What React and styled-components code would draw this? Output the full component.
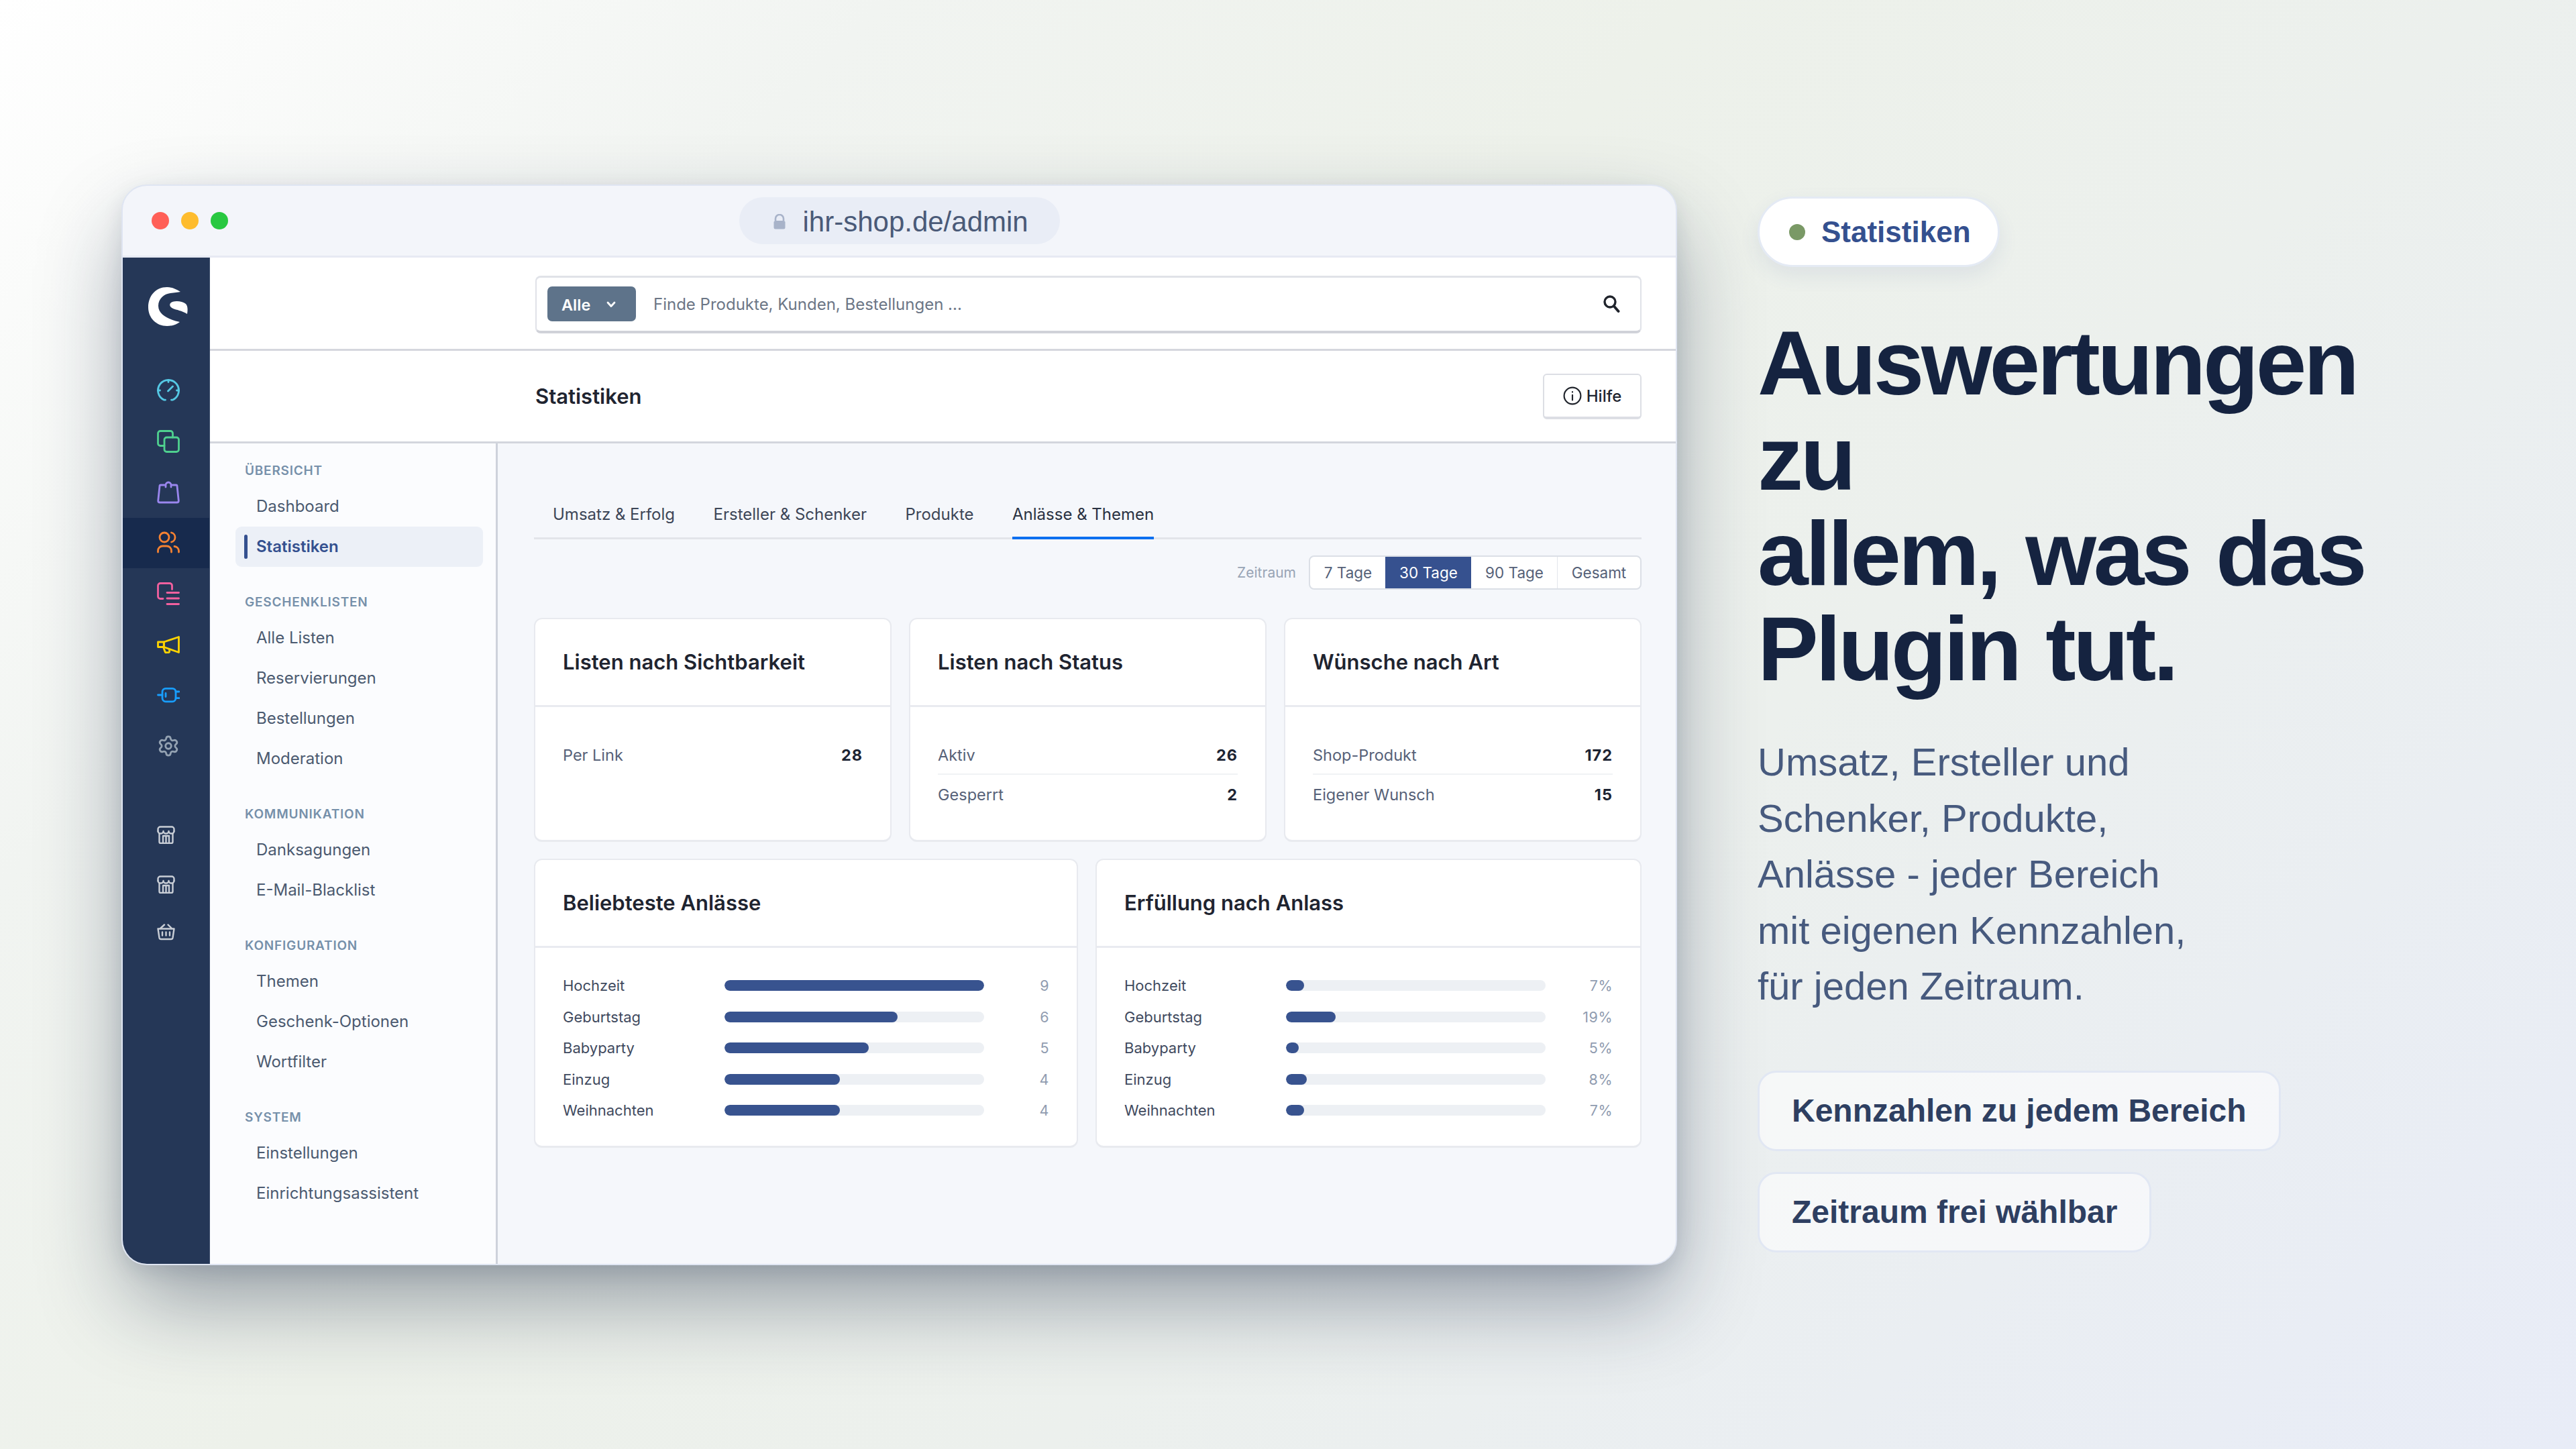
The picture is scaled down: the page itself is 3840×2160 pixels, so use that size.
import React from 'react';
import styled, { createGlobalStyle } from 'styled-components';
import { Settings } from 'lucide-react';

const GlobalStyle = createGlobalStyle`
  html, body { margin: 0; padding: 0; }
  * { box-sizing: border-box; }
  body { font-family: 'Inter', 'Liberation Sans', sans-serif; }
`;

const Page = styled.div`
  width: 3840px;
  height: 2160px;
  overflow: hidden;
  display: flex;
  align-items: center;
  gap: 120px;
  padding-left: 181px;
  background: linear-gradient(135deg, #ffffff 0%, #f1f4f1 22%, #edf1ea 42%, #ecf0ed 62%, #e8ecf7 100%);
`;

const Browser = styled.div`
  width: 2319px;
  height: 1611px;
  flex: none;
  display: flex;
  flex-direction: column;
  background: #f3f5fa;
  border: 2px solid #dfe5f2;
  border-radius: 38px;
  overflow: hidden;
  box-shadow: 0 60px 130px -10px rgba(21, 35, 64, 0.42), 0 10px 30px rgba(21, 35, 64, 0.1);
`;

const TitleBar = styled.div`
  height: 107px;
  flex: none;
  display: grid;
  grid-template-columns: 1fr auto 1fr;
  align-items: center;
  padding-left: 43px;
  border-bottom: 3px solid #e7eaf3;
`;

const Dots = styled.div`
  display: flex;
  gap: 18px;
`;

const Dot = styled.span`
  width: 26px;
  height: 26px;
  border-radius: 50%;
  background: ${(p) => p.$color};
`;

const UrlPill = styled.div`
  height: 70px;
  width: 478px;
  display: flex;
  align-items: center;
  gap: 25px;
  padding: 3px 0 0 50px;
  margin: 1px 0 0 -43px;
  border-radius: 35px;
  background: #e9edf6;
  color: #4a5a78;
  font-family: 'Liberation Sans', sans-serif;
  font-size: 42px;
`;

const Shell = styled.div`
  flex: 1;
  display: flex;
  min-height: 0;
`;

const Rail = styled.div`
  width: 130px;
  flex: none;
  background: #253757;
  display: flex;
  flex-direction: column;
  border-right: 1px solid #3d4e6c;
`;

const LogoSlot = styled.div`
  height: 161px;
  padding: 44px 0 0 38px;
`;

const RailItem = styled.div`
  height: ${(p) => p.$h || 75.7}px;
  display: flex;
  align-items: center;
  padding-left: 51px;
  background: ${(p) => (p.$active ? '#172a4d' : 'transparent')};
  color: ${(p) => p.$color};
`;

const RailGap = styled.div`
  height: 57px;
`;

const Main = styled.div`
  flex: 1;
  display: flex;
  flex-direction: column;
  min-width: 0;
`;

const SearchRow = styled.div`
  height: 139px;
  flex: none;
  background: #fff;
  border-bottom: 3px solid #d5d7de;
  padding: 27px 51px 0 485px;
`;

const SearchBox = styled.div`
  height: 86px;
  display: flex;
  align-items: center;
  padding: 0 30px 0 16px;
  border: 2px solid #e0e2e8;
  border-bottom: 4px solid #d0d2d9;
  border-top-width: 3px;
  border-radius: 8px;
`;

const ScopeButton = styled.div`
  width: 132px;
  height: 52px;
  display: flex;
  align-items: center;
  gap: 24px;
  padding: 2px 0 0 21px;
  background: #5e738a;
  border-radius: 7px;
  color: #fff;
  font-size: 23.5px;
  font-weight: 600;
`;

const Placeholder = styled.div`
  flex: 1;
  margin-left: 26px;
  color: #6c7686;
  font-size: 24px;
`;

const PageHead = styled.div`
  height: 138px;
  flex: none;
  display: flex;
  align-items: center;
  justify-content: space-between;
  background: #fff;
  border-bottom: 3px solid #d3d6dd;
  padding: 0 51px 0 485px;
`;

const PageTitle = styled.h1`
  margin: 0;
  color: #1f2430;
  font-size: 31px;
  font-weight: 600;
`;

const HelpButton = styled.div`
  width: 147px;
  height: 68px;
  margin-top: 2px;
  display: flex;
  align-items: center;
  justify-content: center;
  gap: 7px;
  background: #fff;
  border: 2px solid #dcdee4;
  border-bottom-width: 4px;
  border-radius: 6px;
  color: #1f2430;
  font-size: 24px;
  font-weight: 500;
`;

const Content = styled.div`
  flex: 1;
  display: flex;
  min-height: 0;
`;

const SideNav = styled.nav`
  width: 429px;
  flex: none;
  background: #fbfcfe;
  border-right: 3px solid #ced2db;
  padding: 18px 19px 0 38px;
`;

const NavHead = styled.div`
  height: 46px;
  display: flex;
  align-items: center;
  margin: ${(p) => (p.$first ? 0 : 30)}px 0 0 14px;
  color: #7690aa;
  font-size: 19px;
  font-weight: 600;
  letter-spacing: 0.8px;
`;

const NavItem = styled.div`
  position: relative;
  height: 60px;
  display: flex;
  align-items: center;
  padding-left: 31px;
  border-radius: 9px;
  background: ${(p) => (p.$active ? '#ecf0f7' : 'transparent')};
  color: ${(p) => (p.$active ? '#34508f' : '#4b5a70')};
  font-size: 24px;
  font-weight: ${(p) => (p.$active ? 600 : 400)};

  ${(p) => p.$active && `
    &::before {
      content: '';
      position: absolute;
      left: 13px;
      top: 12px;
      width: 5px;
      height: 36px;
      border-radius: 3px;
      background: #34508f;
    }
  `}
`;

const Panel = styled.div`
  flex: 1;
  background: #f5f7fb;
  padding: 69px 51px 0 54px;
  min-width: 0;
`;

const TabBar = styled.div`
  height: 74px;
  display: flex;
  gap: 57.5px;
  padding-left: 28px;
  border-bottom: 3px solid #e3e5ea;
`;

const Tab = styled.div`
  height: 74px;
  flex: none;
  display: flex;
  align-items: center;
  padding-top: 4px;
  color: ${(p) => (p.$active ? '#2a3242' : '#3d4657')};
  font-size: 24px;
  border-bottom: 4px solid ${(p) => (p.$active ? '#0d6ff0' : 'transparent')};
`;

const RangeRow = styled.div`
  margin-top: 24px;
  display: flex;
  justify-content: flex-end;
  align-items: center;
  gap: 19px;
`;

const RangeLabel = styled.div`
  color: #98a4b5;
  font-size: 21px;
`;

const Segments = styled.div`
  height: 51px;
  display: flex;
  background: #fff;
  border: 2px solid #dbdfe6;
  border-radius: 8px;
  overflow: hidden;
`;

const Segment = styled.div`
  width: ${(p) => p.$w}px;
  display: flex;
  align-items: center;
  justify-content: center;
  background: ${(p) => (p.$active ? '#36518f' : 'transparent')};
  color: ${(p) => (p.$active ? '#fff' : '#566178')};
  font-size: 22.5px;
  border-left: 1px solid ${(p) => (p.$divider ? '#e3e6ec' : 'transparent')};
`;

const CardGrid = styled.div`
  display: grid;
  grid-template-columns: ${(p) => p.$cols};
  gap: 26px;
  margin-top: ${(p) => p.$top}px;
`;

const Card = styled.div`
  background: #fff;
  border: 2px solid #e8eaef;
  border-bottom-width: 3px;
  border-radius: 12px;
  overflow: hidden;
`;

const CardHead = styled.div`
  height: 131px;
  display: flex;
  align-items: center;
  padding-left: 41px;
  border-bottom: 3px solid #e9ebf0;
  color: #1f2430;
  font-size: 31px;
  font-weight: 600;
`;

const StatBody = styled.div`
  padding: 42px 41px 38px;
`;

const StatRow = styled.div`
  height: 59px;
  display: flex;
  align-items: center;
  justify-content: space-between;
  padding-top: 3px;
  border-bottom: 2px solid ${(p) => (p.$last ? 'transparent' : '#f0f2f5')};
  color: #566178;
  font-size: 23.5px;
`;

const StatValue = styled.span`
  color: #1d2433;
  font-weight: 700;
  letter-spacing: 1px;
`;

const BarBody = styled.div`
  padding: 42.5px 41px 39px;
  display: flex;
  flex-direction: column;
  gap: 18.5px;
`;

const BarRow = styled.div`
  height: 28px;
  display: grid;
  grid-template-columns: 241px 387px 1fr;
  align-items: center;
  color: #3f4a5e;
  font-size: 22px;
`;

const BarTrack = styled.div`
  height: 16px;
  border-radius: 8px;
  background: #edf0f4;
  overflow: hidden;
`;

const BarFill = styled.div`
  height: 100%;
  border-radius: 8px;
  background: #38538f;
`;

const BarValue = styled.span`
  text-align: right;
  color: #909cb0;
  font-size: 21.5px;
  letter-spacing: 0.5px;
`;

const Aside = styled.div`
  flex: none;
  width: 1000px;
  font-family: 'Liberation Sans', sans-serif;
  display: flex;
  flex-direction: column;
  align-items: flex-start;
`;

const Badge = styled.div`
  width: 361px;
  height: 105px;
  display: flex;
  align-items: center;
  gap: 24px;
  padding-left: 44px;
  border-radius: 53px;
  background: #fff;
  border: 3px solid #e4eaf4;
  box-shadow: 0 12px 30px rgba(52, 80, 143, 0.09);
  color: #34508f;
  font-size: 44px;
  font-weight: 700;
`;

const BadgeDot = styled.span`
  width: 24px;
  height: 24px;
  border-radius: 50%;
  background: #7a9966;
`;

const Headline = styled.h2`
  margin: 72px 0 0;
  color: #152340;
  font-size: 136px;
  font-weight: 700;
  line-height: 142px;
  letter-spacing: -4.3px;
  word-spacing: 6px;
`;

const Lead = styled.p`
  margin: 56px 0 0;
  color: #475a7e;
  font-size: 58px;
  line-height: 83.5px;
`;

const Chip = styled.div`
  height: 120px;
  display: flex;
  align-items: center;
  padding: 0 48px;
  margin-top: ${(p) => p.$top}px;
  background: rgba(255, 255, 255, 0.55);
  border: 3px solid #e1e7f3;
  border-radius: 28px;
  color: #2e3f61;
  font-size: 48px;
  font-weight: 700;
`;

const Ico = ({ size = 34, children, sw = 2.8 }) => (
  <svg width={size} height={size} viewBox={`0 0 ${size} ${size}`} fill="none" stroke="currentColor"
    strokeWidth={sw} strokeLinecap="round" strokeLinejoin="round">
    {children}
  </svg>
);

const StoreIcon = () => (
  <Ico size={27} sw={2.4}>
    <path d="M3.5 12V24A2 2 0 0 0 5.5 26H21.5A2 2 0 0 0 23.5 24V12" />
    <path d="M1.5 8V5A3.5 3.5 0 0 1 5 1.5H22A3.5 3.5 0 0 1 25.5 5V8" />
    <path d="M1.5 8A4 3.5 0 0 0 9.5 8A4 3.5 0 0 0 17.5 8A4 3.5 0 0 0 25.5 8" />
    <path d="M9 26V15H18V26M13.5 15V26" />
  </Ico>
);

const railIcons = [
  ['#55c8e4', (
    <Ico>
      <path d="M12.5 31.2H10.8A15.5 15.5 0 1 1 23.2 31.2H21.5" />
      <path d="M17 1.5V4.5M1.5 17H4.5M29.5 17H32.5M16.5 18L23.5 11" />
    </Ico>
  )],
  ['#4fd08f', (
    <Ico>
      <path d="M11 23.5H5A3.5 3.5 0 0 1 1.5 20V5A3.5 3.5 0 0 1 5 1.5H20A3.5 3.5 0 0 1 23.5 5V11" />
      <rect x="11" y="11" width="21.5" height="21.5" rx="3.5" />
    </Ico>
  )],
  ['#9a86ee', (
    <Ico>
      <path d="M11 6H5.5A1.5 1.5 0 0 0 4 7.5L1.7 29.5A2.5 2.5 0 0 0 4.2 32H29.8A2.5 2.5 0 0 0 32.3 29.5L30 7.5A1.5 1.5 0 0 0 28.5 6H23" />
      <path d="M13 9V6A4 4 0 0 1 21 6V9" />
    </Ico>
  )],
  ['#f58232', (
    <Ico>
      <circle cx="11" cy="9" r="7" />
      <path d="M21.5 2A7.2 7.2 0 0 1 21.5 16" />
      <path d="M1.5 31V29A7 7 0 0 1 8.5 22H14.5A7 7 0 0 1 21.5 29V31" />
      <path d="M26 22.5A7 7 0 0 1 32.5 29V31" />
    </Ico>
  ), true],
  ['#f2609f', (
    <Ico>
      <path d="M9 24.5H5A3.5 3.5 0 0 1 1.5 21V5A3.5 3.5 0 0 1 5 1.5H19A3.5 3.5 0 0 1 22.5 5V10.5" />
      <path d="M15 15.5H32.5M15 24H32.5M15 32.5H32.5" />
    </Ico>
  )],
  ['#ffd400', (
    <Ico>
      <path d="M10.3 13L32.5 5.5V28.5L10.3 20.5Z" />
      <path d="M1.5 13H10.3V20.5H1.5Z" />
      <path d="M10 22L12 27.5A1.8 1.8 0 0 0 14 28.7H17A1.8 1.8 0 0 0 18.7 26.5L18.3 24" />
    </Ico>
  )],
  ['#189eff', (
    <Ico>
      <rect x="8" y="7.3" width="20" height="19.5" rx="5" />
      <path d="M1.5 17H8M28 12H33M28 21.7H33M13 14.5V19.5" />
    </Ico>
  )],
  ['#94a2b2', <Settings size={34} strokeWidth={2} />],
];

const navSections = [
  ['ÜBERSICHT', ['Dashboard', 'Statistiken']],
  ['GESCHENKLISTEN', ['Alle Listen', 'Reservierungen', 'Bestellungen', 'Moderation']],
  ['KOMMUNIKATION', ['Danksagungen', 'E-Mail-Blacklist']],
  ['KONFIGURATION', ['Themen', 'Geschenk-Optionen', 'Wortfilter']],
  ['SYSTEM', ['Einstellungen', 'Einrichtungsassistent']],
];

const statCards = [
  ['Listen nach Sichtbarkeit', [['Per Link', 28]]],
  ['Listen nach Status', [['Aktiv', 26], ['Gesperrt', 2]]],
  ['Wünsche nach Art', [['Shop-Produkt', 172], ['Eigener Wunsch', 15]]],
];

const occasions = ['Hochzeit', 'Geburtstag', 'Babyparty', 'Einzug', 'Weihnachten'];
const counts = [9, 6, 5, 4, 4];
const rates = [7, 19, 5, 8, 7];

const BarCard = ({ title, values, max, unit = '' }) => (
  <Card>
    <CardHead>{title}</CardHead>
    <BarBody>
      {occasions.map((name, i) => (
        <BarRow key={name}>
          {name}
          <BarTrack>
            <BarFill style={{ width: `${(values[i] / max) * 100}%` }} />
          </BarTrack>
          <BarValue>{values[i]}{unit}</BarValue>
        </BarRow>
      ))}
    </BarBody>
  </Card>
);

const App = () => {
  return (
    <Page>
      <GlobalStyle />
      <Browser>
        <TitleBar>
          <Dots>
            <Dot $color="#ff5f57" />
            <Dot $color="#febc2e" />
            <Dot $color="#28c840" />
          </Dots>
          <UrlPill>
            <svg width="20" height="24" viewBox="0 0 20 24">
              <path d="M4 10V7a6 6 0 0 1 12 0v3" fill="none" stroke="#a8b3c9" strokeWidth="2.6" />
              <rect x="1.5" y="10" width="17" height="12.5" rx="2.5" fill="#a8b3c9" />
            </svg>
            ihr-shop.de/admin
          </UrlPill>
        </TitleBar>
        <Shell>
          <Rail>
            <LogoSlot>
              <svg width="60" height="58" viewBox="0 0 60 58" fill="#fff">
                <path d="M48 7C40 2 34 0 28 0C11 0 0 13 0 30C0 46 12 58 28 58C35 58 42 56 47 52C38 50 15 44 15 28C15 17 24 10 33 9C39 8 44 8 48 7Z" />
                <path d="M33 24C36 20 50 20 56 25C59 28 59 34 58 40C50 35 42 34 37 32C33 30 31 27 33 24Z" />
              </svg>
            </LogoSlot>
            {railIcons.map(([color, icon, active]) => (
              <RailItem key={color} $color={color} $active={active}>{icon}</RailItem>
            ))}
            <RailGap />
            <RailItem $color="#c9ced6" $h={74}><StoreIcon /></RailItem>
            <RailItem $color="#c9ced6" $h={74}><StoreIcon /></RailItem>
            <RailItem $color="#c9ced6" $h={66}>
              <Ico size={27} sw={2.4}>
                <path d="M5 9L11 3.5M16.5 3.5L22 9" />
                <path d="M1.5 9.5H25.5L23.5 23A2.5 2.5 0 0 1 21 25H6A2.5 2.5 0 0 1 3.5 23Z" />
                <path d="M8 14.5V19.5M13.5 14.5V19.5M19 14.5V19.5" />
              </Ico>
            </RailItem>
          </Rail>
          <Main>
            <SearchRow>
              <SearchBox>
                <ScopeButton>
                  Alle
                  <svg width="14" height="10" viewBox="0 0 14 10" fill="none" stroke="#fff" strokeWidth="2.8" strokeLinecap="round" strokeLinejoin="round">
                    <path d="M2 2L7 7.5L12 2" />
                  </svg>
                </ScopeButton>
                <Placeholder>Finde Produkte, Kunden, Bestellungen ...</Placeholder>
                <svg width="26" height="28" viewBox="0 0 26 28" fill="none" stroke="#20242c" strokeLinecap="round">
                  <circle cx="11" cy="11" r="8" strokeWidth="3.4" />
                  <path d="M17 17.5L23.5 25" strokeWidth="4" />
                </svg>
              </SearchBox>
            </SearchRow>
            <PageHead>
              <PageTitle>Statistiken</PageTitle>
              <HelpButton>
                <svg width="28" height="28" viewBox="0 0 26 26" fill="none" stroke="#20242c" strokeWidth="2" strokeLinecap="round">
                  <circle cx="13" cy="13" r="11.5" />
                  <path d="M13 12V19M13 7.5V8" />
                </svg>
                Hilfe
              </HelpButton>
            </PageHead>
            <Content>
              <SideNav>
                {navSections.map(([head, items], s) => (
                  <React.Fragment key={head}>
                    <NavHead $first={s === 0}>{head}</NavHead>
                    {items.map((item) => (
                      <NavItem key={item} $active={item === 'Statistiken'}>{item}</NavItem>
                    ))}
                  </React.Fragment>
                ))}
              </SideNav>
              <Panel>
                <TabBar>
                  <Tab>Umsatz &amp; Erfolg</Tab>
                  <Tab>Ersteller &amp; Schenker</Tab>
                  <Tab>Produkte</Tab>
                  <Tab $active>Anlässe &amp; Themen</Tab>
                </TabBar>
                <RangeRow>
                  <RangeLabel>Zeitraum</RangeLabel>
                  <Segments>
                    <Segment $w={112}>7 Tage</Segment>
                    <Segment $w={128} $active>30 Tage</Segment>
                    <Segment $w={128}>90 Tage</Segment>
                    <Segment $w={124} $divider>Gesamt</Segment>
                  </Segments>
                </RangeRow>
                <CardGrid $cols="repeat(3, 1fr)" $top={42}>
                  {statCards.map(([title, rows]) => (
                    <Card key={title}>
                      <CardHead>{title}</CardHead>
                      <StatBody>
                        {rows.map(([label, value], i) => (
                          <StatRow key={label} $last={i === rows.length - 1}>
                            {label}
                            <StatValue>{value}</StatValue>
                          </StatRow>
                        ))}
                      </StatBody>
                    </Card>
                  ))}
                </CardGrid>
                <CardGrid $cols="811px 1fr" $top={25}>
                  <BarCard title="Beliebteste Anlässe" values={counts} max={9} />
                  <BarCard title="Erfüllung nach Anlass" values={rates} max={100} unit="%" />
                </CardGrid>
              </Panel>
            </Content>
          </Main>
        </Shell>
      </Browser>
      <Aside>
        <Badge><BadgeDot />Statistiken</Badge>
        <Headline>Auswertungen<br />zu<br />allem, was das<br />Plugin tut.</Headline>
        <Lead>Umsatz, Ersteller und<br />Schenker, Produkte,<br />Anlässe - jeder Bereich<br />mit eigenen Kennzahlen,<br />für jeden Zeitraum.</Lead>
        <Chip $top={84}>Kennzahlen zu jedem Bereich</Chip>
        <Chip $top={31}>Zeitraum frei wählbar</Chip>
      </Aside>
    </Page>
  );
};

export default App;
